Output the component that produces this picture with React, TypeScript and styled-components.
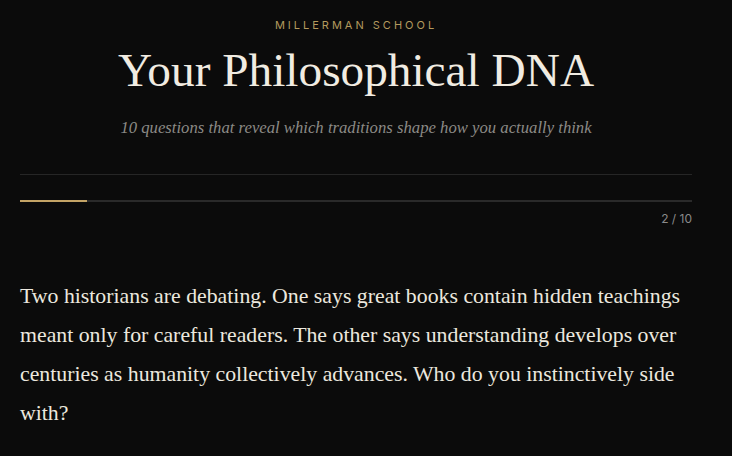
import styled, { createGlobalStyle } from "styled-components";

const GlobalStyle = createGlobalStyle`
  html, body {
    margin: 0;
    padding: 0;
    background: #0b0b0b;
  }
  body {
    overflow: hidden;
  }
`;

const Page = styled.div`
  min-height: 100vh;
  background: #0b0b0b;
  padding: 0 40px 0 20px;
  box-sizing: border-box;
`;

const Header = styled.header`
  display: flex;
  flex-direction: column;
  align-items: center;
  padding-top: 18px;
  padding-bottom: 36px;
  border-bottom: 1px solid #262626;
`;

const Eyebrow = styled.div`
  font-family: "Inter", "Liberation Sans", sans-serif;
  font-size: 11px;
  letter-spacing: 3px;
  color: #b39a5e;
  text-transform: uppercase;
`;

const Title = styled.h1`
  margin: 12px 0 0;
  font-family: "Liberation Serif", serif;
  font-weight: 400;
  font-size: 47.3px;
  line-height: 1.1;
  color: #f1ece2;
`;

const Subtitle = styled.p`
  margin: 22px 0 0;
  font-family: "Liberation Serif", serif;
  font-style: italic;
  font-size: 16.7px;
  color: #8c8a86;
`;

const Progress = styled.div`
  margin-top: 25px;
  display: flex;
  flex-direction: column;
  align-items: flex-end;
  gap: 9px;
`;

const Track = styled.div`
  width: 100%;
  height: 2px;
  background: #2a2a2a;
`;

const Fill = styled.div`
  height: 100%;
  background: #c4a466;
`;

const Counter = styled.span`
  font-family: "Inter", "Liberation Sans", sans-serif;
  font-size: 12px;
  color: #8a8a8a;
`;

const Question = styled.p`
  margin: 51px 0 0;
  font-family: "Liberation Serif", serif;
  font-size: 21.8px;
  line-height: 39px;
  color: #ece8df;
`;

export default function App() {
  const current = 2;
  const total = 10;
  return (
    <>
      <GlobalStyle />
      <Page>
        <Header>
          <Eyebrow>Millerman School</Eyebrow>
          <Title>Your Philosophical DNA</Title>
          <Subtitle>10 questions that reveal which traditions shape how you actually think</Subtitle>
        </Header>
        <Progress>
          <Track>
            <Fill style={{ width: `${((current - 1) / total) * 100}%` }} />
          </Track>
          <Counter>
            {current} / {total}
          </Counter>
        </Progress>
        <Question>
          Two historians are debating. One says great books contain hidden teachings meant only for careful
          readers. The other says understanding develops over centuries as humanity collectively advances. Who
          do you instinctively side with?
        </Question>
      </Page>
    </>
  );
}
